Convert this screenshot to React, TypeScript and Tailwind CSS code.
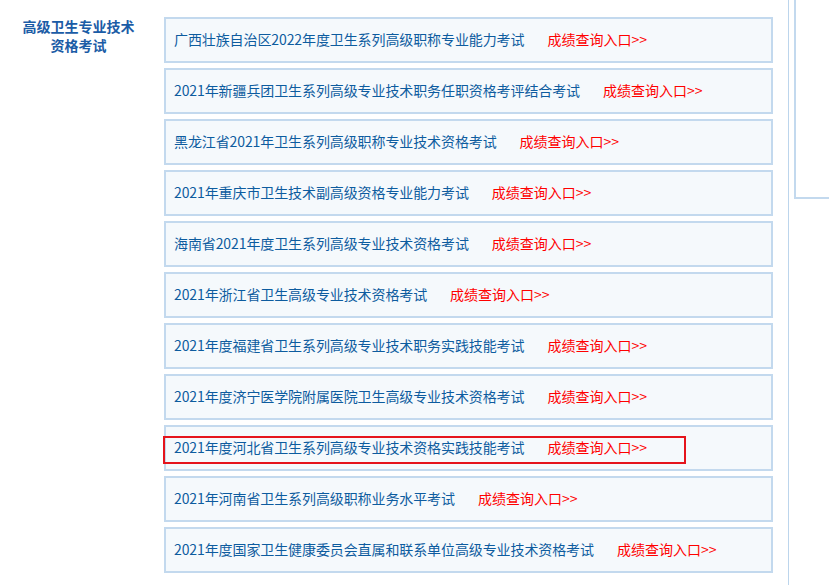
const ITEMS = [
  '广西壮族自治区2022年度卫生系列高级职称专业能力考试',
  '2021年新疆兵团卫生系列高级专业技术职务任职资格考评结合考试',
  '黑龙江省2021年卫生系列高级职称专业技术资格考试',
  '2021年重庆市卫生技术副高级资格专业能力考试',
  '海南省2021年度卫生系列高级专业技术资格考试',
  '2021年浙江省卫生高级专业技术资格考试',
  '2021年度福建省卫生系列高级专业技术职务实践技能考试',
  '2021年度济宁医学院附属医院卫生高级专业技术资格考试',
  '2021年度河北省卫生系列高级专业技术资格实践技能考试',
  '2021年河南省卫生系列高级职称业务水平考试',
  '2021年度国家卫生健康委员会直属和联系单位高级专业技术资格考试',
];

// index of the row that has the red annotation box drawn over it
const MARKED = 8;

export default function App() {
  return (
    <div
      className="flex h-[585px] w-[829px] overflow-hidden bg-white text-[14px]"
      style={{ fontFamily: '"Microsoft YaHei", "Noto Sans CJK SC", sans-serif' }}
    >
      <div className="w-[164px] shrink-0">
        <h2 className="w-[157px] pt-[17px] text-center text-[14px] font-bold leading-[19px] text-[#1b5ca6]">
          高级卫生专业技术
          <br />
          资格考试
        </h2>
      </div>

      <ul className="flex w-[609px] shrink-0 flex-col gap-[5px] pt-[17px]">
        {ITEMS.map((title, i) => (
          <li
            key={i}
            className="relative flex h-[46px] items-center border-2 border-[#c3d9ee] bg-[#f5f9fc] pb-px pl-[8px]"
          >
            <a className="whitespace-nowrap tracking-[-0.1px] text-[#0d5c9f]">{title}</a>
            <a className="ml-[23px] whitespace-nowrap text-[#ff0000]">成绩查询入口&gt;&gt;</a>
            {i === MARKED && (
              <div className="absolute left-[-3px] top-[9px] h-[28px] w-[523px] border-2 border-[#e5141c]" />
            )}
          </li>
        ))}
      </ul>

      <div className="ml-[15px] flex-1 border-l border-[#bcd5ec] pl-[5px]">
        <div className="h-[199px] border-b-2 border-l-2 border-[#c3d9ee]" />
      </div>
    </div>
  );
}
